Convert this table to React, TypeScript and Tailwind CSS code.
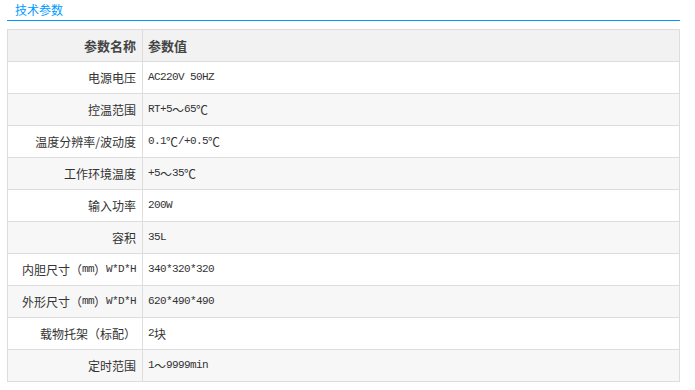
import React from "react";

const rows: [string, string][] = [
  ["电源电压", "AC220V 50HZ"],
  ["控温范围", "RT+5～65℃"],
  ["温度分辨率/波动度", "0.1℃/+0.5℃"],
  ["工作环境温度", "+5～35℃"],
  ["输入功率", "200W"],
  ["容积", "35L"],
  ["内胆尺寸（mm）W*D*H", "340*320*320"],
  ["外形尺寸（mm）W*D*H", "620*490*490"],
  ["载物托架（标配）", "2块"],
  ["定时范围", "1～9999min"],
];

function Mixed({ text }: { text: string }) {
  const parts = text.match(/[\u0000-\u00ff]+|[^\u0000-\u00ff]+/g) || [];
  return (
    <>
      {parts.map((p, i) =>
        /^[\u0000-\u00ff]+$/.test(p) && p !== "/" ? (
          <span
            key={i}
            className="text-[11px] tracking-[-0.6px]"
            style={{ fontFamily: '"Liberation Mono", monospace' }}
          >
            {p}
          </span>
        ) : (
          <span key={i}>{p}</span>
        )
      )}
    </>
  );
}

export default function App() {
  return (
    <div
      className="w-[695px] h-[390px] bg-white pl-[7px] pt-0"
      style={{ fontFamily: '"Noto Sans CJK SC", "Noto Sans", sans-serif' }}
    >
      <div className="w-[673px]">
        <div className="h-[21px] border-b border-[#0099ff] pl-[8px] text-[12px] leading-[20px] text-[#0099ff]">
          技术参数
        </div>
        <div className="mt-[8px] border-l border-r border-t border-[#dddddd]">
          <div className="flex h-[32px] border-b border-[#dddddd] bg-[#f2f2f2] text-[13px] font-bold text-[#444]">
            <div className="w-[135px] border-r border-[#dddddd] pr-[6px] flex items-center justify-end">
              参数名称
            </div>
            <div className="flex-1 pl-[5px] flex items-center">参数值</div>
          </div>
          {rows.map(([k, v], i) => (
            <div
              key={k}
              className={
                "flex h-[32px] border-b border-[#dddddd] text-[12px] text-[#333] " +
                (i % 2 === 1 ? "bg-[#f7f7f7]" : "bg-white")
              }
            >
              <div className="w-[135px] border-r border-[#dddddd] pr-[6px] flex items-center justify-end whitespace-nowrap">
                <Mixed text={k} />
              </div>
              <div className="flex-1 pl-[5px] flex items-center whitespace-nowrap">
                <Mixed text={v} />
              </div>
            </div>
          ))}
        </div>
      </div>
    </div>
  );
}
